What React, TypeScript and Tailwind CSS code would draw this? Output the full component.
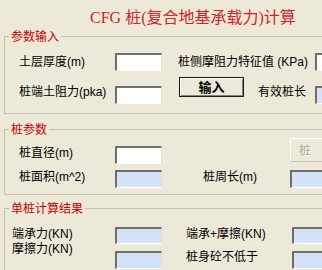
const FONT = "font-['Liberation_Sans','Noto_Sans_CJK_SC',sans-serif] text-[12px] leading-[14px] text-black whitespace-nowrap";
const LEGEND = "ml-[4px] px-[2px] text-[12px] leading-[14px] text-[#cc0000] font-['Noto_Sans_CJK_SC',sans-serif]";
const GROUP = "mx-[4px] border border-[#c4c1b3]";
// sunken edit box, XP classic look
const EDIT = "shrink-0 border-t-2 border-l-2 border-r border-b border-t-[#6e6e6e] border-l-[#6e6e6e] border-r-[#e2e0d4] border-b-[#ffffff]";

export default function App() {
  return (
    <div className="w-[322px] h-[270px] overflow-hidden bg-[#ece9d8]">
      <div className="w-[400px]">
        {/* Title */}
        <div className="h-[29px] pt-[8px] pl-[90px] text-[16px] leading-[20px] text-[#d42424] whitespace-nowrap font-['Liberation_Serif','Noto_Sans_CJK_SC',serif]">
          CFG 桩(复合地基承载力)计算
        </div>

        {/* 参数输入 */}
        <fieldset className={`${GROUP} pt-[10px] pb-[9px]`}>
          <legend className={LEGEND}>参数输入</legend>
          <div className="flex items-center h-[18px]">
            <span className={`${FONT} ml-[14px] w-[96px]`}>土层厚度(m)</span>
            <div className={`${EDIT} h-[18px] w-[47px] bg-white`} />
            <span className={`${FONT} ml-[16px] w-[137px] shrink-0 text-[11px]`}>桩侧摩阻力特征值 (KPa)</span>
            <div className={`${EDIT} h-[18px] w-[60px] bg-white`} />
          </div>
          <div className="mt-[6px] flex items-start h-[27px]">
            <span className={`${FONT} ml-[14px] w-[96px] mt-[8px]`}>桩端土阻力(pka)</span>
            <div className={`${EDIT} mt-[9px] h-[18px] w-[47px] bg-white`} />
            <button className="ml-[17px] w-[65px] h-[20px] shrink-0 border border-[#1a1a1a] bg-[#ece9d8] shadow-[inset_1px_1px_0_#ffffff,inset_-1px_-1px_0_#808080] text-[13px] leading-[14px] font-bold font-['Noto_Sans_CJK_SC',sans-serif] text-black">
              输入
            </button>
            <span className={`${FONT} ml-[14px] w-[57px] mt-[8px]`}>有效桩长</span>
            <div className={`${EDIT} mt-[9px] h-[18px] w-[60px] bg-[#d5e3f9]`} />
          </div>
        </fieldset>

        {/* 桩参数 */}
        <fieldset className={`${GROUP} mt-[8px] pt-[2px] pb-[6px]`}>
          <legend className={LEGEND}>桩参数</legend>
          <div className="flex items-start h-[26px]">
            <span className={`${FONT} ml-[14px] w-[96px] mt-[8px]`}>桩直径(m)</span>
            <div className={`${EDIT} mt-[8px] h-[18px] w-[47px] bg-white`} />
            <button
              disabled
              className="ml-[128px] w-[70px] h-[24px] shrink-0 text-left pl-[8px] border-t border-l border-r border-b border-t-[#ffffff] border-l-[#ffffff] border-r-[#c9c6b8] border-b-[#c9c6b8] bg-[#ece9d8] text-[12px] leading-[14px] text-[#aca899] [text-shadow:1px_1px_0_#ffffff] font-['Noto_Sans_CJK_SC',sans-serif]"
            >
              桩
            </button>
          </div>
          <div className="mt-[6px] flex items-start h-[18px]">
            <span className={`${FONT} ml-[14px] w-[96px]`}>桩面积(m^2)</span>
            <div className={`${EDIT} h-[18px] w-[47px] bg-[#d5e3f9]`} />
            <span className={`${FONT} ml-[41px] w-[87px]`}>桩周长(m)</span>
            <div className={`${EDIT} h-[18px] w-[60px] bg-[#d5e3f9]`} />
          </div>
        </fieldset>

        {/* 单桩计算结果 */}
        <fieldset className={`${GROUP} mt-[6px] pt-[12px] pb-[8px]`}>
          <legend className={LEGEND}>单桩计算结果</legend>
          <div className="flex items-start">
            <div className="ml-[7px] w-[103px] flex flex-col">
              <span className={FONT}>端承力(KN)</span>
              <span className={`${FONT} mt-[1px]`}>摩擦力(KN)</span>
            </div>
            <div className="flex flex-col">
              <div className={`${EDIT} h-[17px] w-[47px] bg-[#d5e3f9]`} />
              <div className={`${EDIT} mt-[7px] h-[18px] w-[47px] bg-[#d5e3f9]`} />
            </div>
            <div className="ml-[24px] w-[106px] flex flex-col">
              <span className={FONT}>端承+摩擦(KN)</span>
              <span className={`${FONT} mt-[9px]`}>桩身砼不低于</span>
            </div>
            <div className="flex flex-col">
              <div className={`${EDIT} h-[17px] w-[60px] bg-[#d5e3f9]`} />
              <div className={`${EDIT} mt-[7px] h-[18px] w-[60px] bg-[#d5e3f9]`} />
            </div>
          </div>
        </fieldset>
      </div>
    </div>
  );
}
